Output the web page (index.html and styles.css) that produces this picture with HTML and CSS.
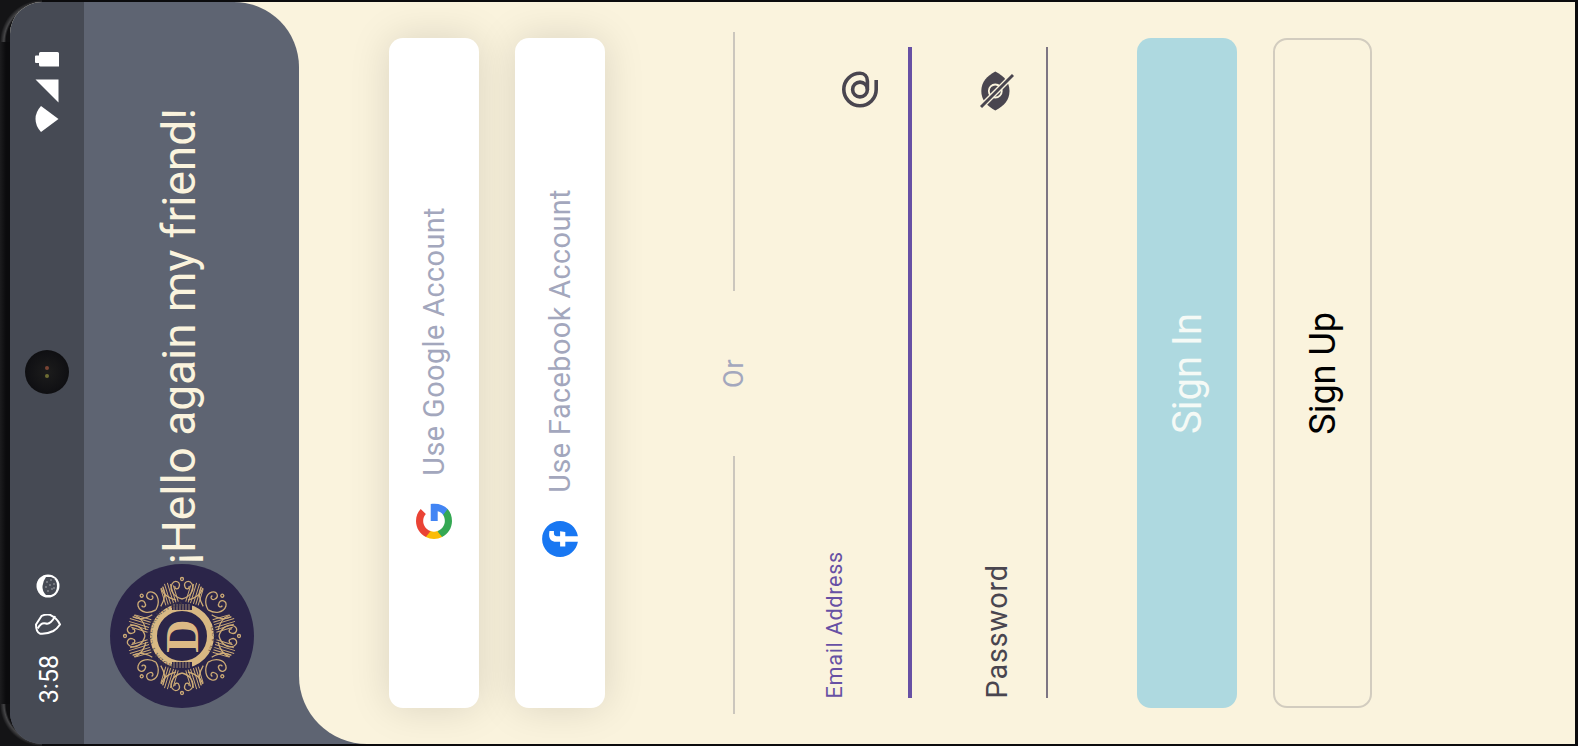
FILE: index.html
```html
<!DOCTYPE html>
<html>
    <head>
        <meta charset="UTF-8">
        <title>Sign In</title>
        <link rel="stylesheet" href="styles.css">
    </head>
    <body>
        <div class="device">
            <div class="screen">

                <div class="status-bar">
                    <div class="status-top">
                        <svg width="24" height="15" viewBox="0 0 24 15"><path d="M4 3.500V1.500Q4 0 5.500 0H22.500Q24 0 24 1.500V14.500H5.500Q4 14.500 4 13V11H1Q0 11 0 10V4.500Q0 3.500 1 3.500Z" fill="#fff"/></svg>
                        <svg width="24" height="24" viewBox="0 0 24 24"><path d="M0.500 0.500H23.500V23.500Z" fill="#fff"/></svg>
                        <svg class="ic-wifi" width="24" height="28" viewBox="0 0 24 28"><path d="M23.500 14L6 27Q0.500 21 0.500 14T6 1Z" fill="#fff"/></svg>
                    </div>
                    <div class="camera"><span class="lens-red"></span><span class="lens-yellow"></span></div>
                    <div class="status-bottom">
                        <svg width="24" height="24" viewBox="0 0 24 24">
                            <circle cx="12" cy="12" r="11.500" fill="#fff"/>
                            <path d="M10 3H15Q21 5 21 12T15 21H10Q6 17 6.500 12T10 3Z" fill="#464a54"/>
                            <g fill="#fff" opacity=".7">
                                <circle cx="11" cy="8" r=".7"/><circle cx="15" cy="6" r=".7"/><circle cx="18" cy="10" r=".7"/>
                                <circle cx="14" cy="11" r=".7"/><circle cx="10" cy="13" r=".7"/><circle cx="16" cy="15" r=".7"/>
                                <circle cx="12" cy="17" r=".7"/><circle cx="18" cy="14" r=".7"/>
                            </g>
                        </svg>
                        <svg width="26" height="21" viewBox="0 0 26 21" fill="none" stroke="#fff" stroke-width="2">
                            <path d="M1 10.500L6.700 1.800Q11 0 15 .8Q22 4 25 10.500Q22 15 18.300 17Q11 20.500 5 19.700Q1 18 1 10.500Z"/>
                            <path d="M2.700 14.500C5 10 8 8.500 11 9.500S18 7 20 2"/>
                        </svg>
                        <span class="clock">3:58</span>
                    </div>
                </div>

                <div class="sidebar">
                    <h1 class="vtext greeting">¡Hello again my friend!</h1>
                    <svg class="logo" width="144" height="144" viewBox="0 0 144 144">
                        <defs>
                            <g id="scroll" fill="none" stroke="#cdab76" stroke-width="1.300">
                                <path d="M72 35C64 33 59 26 62 20C65 15 71 18 69 23C68 26 64 25 65 22"/>
                                <path d="M72 35C80 33 85 26 82 20C79 15 73 18 75 23C76 26 80 25 79 22"/>
                                <path d="M66 36C58 34 53 30 51 24"/>
                                <path d="M78 36C86 34 91 30 93 24"/>
                                <circle cx="72" cy="15" r="1.500"/>
                            </g>
                            <g id="fan" stroke="#cdab76" stroke-width="1">
                                <path d="M68 38V19M70.500 38V17M73.500 38V17M76 38V19M65.500 38V21M78.500 38V21"/>
                            </g>
                            <path id="ring-left" d="M72 102A30 30 0 0 1 72 42"/>
                            <path id="ring-right" d="M72 42A30 30 0 0 1 72 102"/>
                        </defs>
                        <circle cx="72" cy="72" r="72" fill="#2b2549"/>
                        <use href="#scroll"/>
                        <use href="#scroll" transform="rotate(45 72 72)"/>
                        <use href="#scroll" transform="rotate(90 72 72)"/>
                        <use href="#scroll" transform="rotate(135 72 72)"/>
                        <use href="#scroll" transform="rotate(180 72 72)"/>
                        <use href="#scroll" transform="rotate(225 72 72)"/>
                        <use href="#scroll" transform="rotate(270 72 72)"/>
                        <use href="#scroll" transform="rotate(315 72 72)"/>
                        <use href="#fan" transform="rotate(17 72 72)"/>
                        <use href="#fan" transform="rotate(-17 72 72)"/>
                        <use href="#fan" transform="rotate(73 72 72)"/>
                        <use href="#fan" transform="rotate(107 72 72)"/>
                        <use href="#fan" transform="rotate(163 72 72)"/>
                        <use href="#fan" transform="rotate(197 72 72)"/>
                        <use href="#fan" transform="rotate(253 72 72)"/>
                        <use href="#fan" transform="rotate(287 72 72)"/>
                        <circle cx="72" cy="72" r="33" fill="#2b2549"/>
                        <circle cx="72" cy="72" r="28.500" fill="none" stroke="#d8b883" stroke-width="7"/>
                        <path d="M62 40H82V46H62ZM62 98H82V104H62Z" fill="#2b2549"/>
                        <path d="M64 40V46M67 40V46M70 40V46M73 40V46M76 40V46M79 40V46M64 98V104M67 98V104M70 98V104M73 98V104M76 98V104M79 98V104" stroke="#8a7568" stroke-width="1.200"/>
                        <text class="logo-ring"><textPath href="#ring-left" startOffset="8">MODA Y COLORIMETRIA</textPath></text>
                        <text class="logo-ring"><textPath href="#ring-right" startOffset="38">DOV EI</textPath></text>
                        <text class="logo-d" x="72" y="72" transform="rotate(-90 72 72) translate(0 16)">D</text>
                    </svg>
                </div>

                <div class="login">
                    <div class="card">
                        <span class="vtext card-text">Use Google Account</span>
                        <svg width="36" height="36" viewBox="1 1 22 22">
                            <g transform="rotate(-90 12 12)">
                                <path fill="#4285f4" d="M22.560 12.250c0-.78-.07-1.530-.2-2.250H12v4.260h5.920c-.26 1.370-1.040 2.530-2.210 3.310v2.770h3.570c2.080-1.920 3.280-4.740 3.280-8.090z"/>
                                <path fill="#34a853" d="M12 23c2.970 0 5.460-.98 7.280-2.660l-3.570-2.770c-.98.66-2.230 1.060-3.710 1.060-2.860 0-5.290-1.930-6.160-4.530H2.180v2.840C3.990 20.530 7.700 23 12 23z"/>
                                <path fill="#fbbc05" d="M5.840 14.090c-.22-.66-.35-1.360-.35-2.090s.13-1.430.35-2.090V7.070H2.180C1.430 8.550 1 10.220 1 12s.43 3.450 1.180 4.930l2.850-2.220.81-.62z"/>
                                <path fill="#ea4335" d="M12 5.380c1.620 0 3.060.56 4.210 1.640l3.150-3.150C17.450 2.090 14.970 1 12 1 7.700 1 3.990 3.470 2.180 7.070l3.660 2.840c.87-2.600 3.300-4.530 6.160-4.530z"/>
                            </g>
                        </svg>
                    </div>
                    <div class="card">
                        <span class="vtext card-text">Use Facebook Account</span>
                        <svg width="36" height="36" viewBox="0 0 24 24">
                            <path transform="rotate(-90 12 12)" fill="#1877f2" d="M24 12.073c0-6.627-5.373-12-12-12s-12 5.373-12 12c0 5.990 4.388 10.954 10.125 11.854v-8.385H7.078v-3.470h3.047V9.430c0-3.007 1.792-4.669 4.533-4.669 1.312 0 2.686.235 2.686.235v2.953H15.830c-1.491 0-1.956.925-1.956 1.874v2.250h3.328l-.532 3.470h-2.796v8.385C19.612 23.027 24 18.062 24 12.073z"/>
                        </svg>
                    </div>

                    <div class="divider">
                        <span class="divider-line"></span>
                        <span class="vtext divider-text">Or</span>
                        <span class="divider-line"></span>
                    </div>

                    <div class="field field-active">
                        <svg width="36" height="37" viewBox="0 0 36 37" fill="none" stroke="#49454f" stroke-width="3.600">
                            <path d="M34.200 9V18.500A16.200 16.200 0 1 1 18 2.300C22.500 2.300 25.400 5.500 25.400 10V18.500"/>
                            <circle cx="18" cy="18.500" r="7.400"/>
                        </svg>
                        <span class="vtext field-label">Email Address</span>
                    </div>
                    <div class="field">
                        <svg width="34" height="40" viewBox="0 0 34 40">
                            <path d="M15.300 .5C24 5 29.500 11 29.500 20S24 35 15.300 39.500C7 35 1.300 29 1.300 20S7 5 15.300 .5Z" fill="#49454f"/>
                            <circle cx="15.300" cy="20" r="6.500" fill="none" stroke="#faf3dd" stroke-width="1.800"/>
                            <path d="M1 36L33 4" stroke="#faf3dd" stroke-width="5.500"/>
                            <path d="M1 36L33 4" stroke="#49454f" stroke-width="3"/>
                        </svg>
                        <span class="vtext field-label">Password</span>
                    </div>

                    <div class="btn btn-primary"><span class="vtext">Sign In</span></div>
                    <div class="btn btn-outline"><span class="vtext">Sign Up</span></div>
                </div>

            </div>
        </div>
    </body>
</html>
```

FILE: styles.css
```css
* {
    margin: 0;
    padding: 0;
    box-sizing: border-box;
}

body {
    background: #0b0b0d;
    font-family: Roboto, "Liberation Sans", sans-serif;
    overflow: hidden;
}

.device {
    width: 100vw;
    height: 100vh;
    padding: 2px 3px 2px 10px;
    background:
        radial-gradient(circle at 42px 42px, #0e0e10 36px, #454547 38px, #141416 42px, #141416 54px) top left / 42px 42px no-repeat,
        radial-gradient(circle at 42px 0, #0e0e10 36px, #454547 38px, #141416 42px, #141416 54px) bottom left / 42px 42px no-repeat,
        linear-gradient(90deg, #1c1c1e 0, #0b0b0d 6px);
}

.screen {
    height: 100%;
    display: flex;
    border-radius: 32px 0 0 32px;
    overflow: hidden;
    background: linear-gradient(#faf3dd 50%, #5e6472 50%);
}

/* text runs bottom to top all over this page */
.vtext {
    writing-mode: vertical-rl;
    transform: rotate(180deg);
    white-space: nowrap;
}

.status-bar {
    width: 74px;
    flex-shrink: 0;
    display: flex;
    flex-direction: column;
    align-items: center;
    background: #464a54;
    color: white;
    padding: 50px 0;
}

.status-top {
    flex: 1;
    display: flex;
    flex-direction: column;
    gap: 12px;
}

.ic-wifi {
    margin-top: -10px;
}

.status-bottom {
    flex: 1;
    display: flex;
    flex-direction: column;
    align-items: center;
    justify-content: flex-end;
    gap: 16px;
    margin: 0 0 -9px 2px;
}

.clock {
    writing-mode: vertical-rl;
    transform: rotate(180deg);
    font-size: 25px;
    line-height: 24px;
    margin: 4px 0 0 3px;
}

.camera {
    width: 44px;
    height: 44px;
    margin-bottom: 11px;
    border-radius: 50%;
    background: radial-gradient(circle, #1c1c1c 0, #111114 60%, #08080a 100%);
    display: flex;
    flex-direction: column;
    align-items: center;
    justify-content: center;
    gap: 4px;
}

.lens-red, .lens-yellow {
    width: 4px;
    height: 4px;
    border-radius: 50%;
    background: #7a4433;
}

.lens-yellow {
    background: #6e6d33;
}

.sidebar {
    width: 215px;
    flex-shrink: 0;
    display: flex;
    flex-direction: column;
    align-items: center;
    justify-content: flex-end;
    padding: 0 20px 36px 0;
    background: #5e6472;
    border-top-right-radius: 65px;
}

.greeting {
    font-size: 46px;
    font-weight: normal;
    line-height: 52px;
    margin-right: 6px;
    color: #faf3dd;
}

.logo {
    display: block;
}

.logo-ring {
    font-family: "Liberation Serif", serif;
    font-size: 6.500px;
    letter-spacing: .6px;
    fill: #4a3f45;
}

.logo-d {
    font-family: "Liberation Serif", serif;
    font-size: 46px;
    font-weight: bold;
    text-anchor: middle;
    fill: #dcb985;
}

.login {
    flex: 1;
    display: flex;
    background: #faf3dd;
    border-bottom-left-radius: 68px;
    padding: 36px 0 36px 90px;
}

.card {
    width: 90px;
    margin-right: 36px;
    display: flex;
    flex-direction: column;
    align-items: center;
    justify-content: center;
    gap: 28px;
    background: white;
    border-radius: 14px;
    box-shadow: 0 0 40px rgba(0, 0, 0, .13);
}

.card-text {
    font-size: 28.800px;
    letter-spacing: .45px;
    color: #a3a7bd;
}

.divider {
    width: 2px;
    margin: -6px 0 -6px 92px;
    display: flex;
    flex-direction: column;
    align-items: center;
}

.divider-line {
    flex: 1;
    width: 2px;
    background: #cbc6bd;
}

.divider-text {
    height: 165px;
    display: flex;
    align-items: center;
    justify-content: center;
    font-size: 27px;
    letter-spacing: .9px;
    color: #a3a7bd;
}

.field {
    width: 100px;
    margin: 9px 0 10px 36px;
    display: flex;
    flex-direction: column;
    align-items: center;
    justify-content: space-between;
    padding-top: 24px;
    border-right: 2px solid #7d7583;
}

.field-label {
    font-size: 28.800px;
    letter-spacing: .9px;
    color: #49454f;
}

.field-active {
    margin-left: 77px;
    border-right: 4px solid #6750a4;
}

.field-active .field-label {
    font-size: 21.600px;
    letter-spacing: .72px;
    color: #6750a4;
    margin-right: 52px;
}

.btn {
    width: 100px;
    margin-right: 36px;
    display: flex;
    align-items: center;
    justify-content: center;
    border-radius: 14px;
    font-size: 36px;
}

.btn-primary {
    margin-left: 89px;
    background: #aed9e0;
    color: #f5faf6;
    font-size: 40px;
}

.btn-outline {
    width: 99px;
    border: 2px solid #d2ccbf;
    color: black;
}
```
